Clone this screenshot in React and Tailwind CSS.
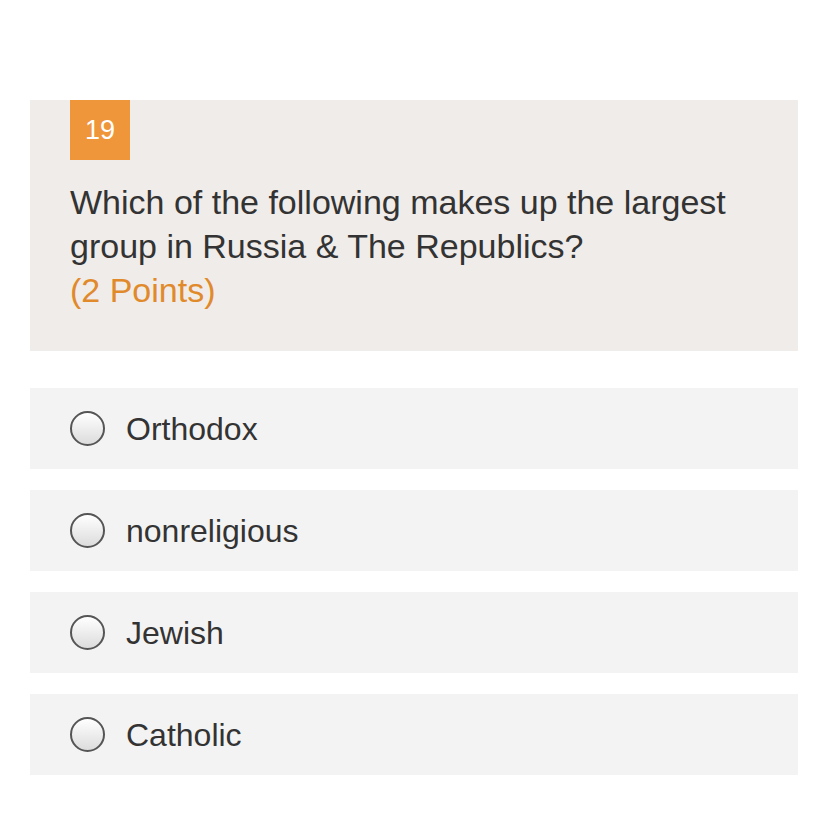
export default function App() {
  const options = ["Orthodox", "nonreligious", "Jewish", "Catholic"];

  return (
    <div className="min-h-screen bg-white pt-[100px] px-[30px] font-['Liberation_Sans',Arial,sans-serif]">
      <div className="bg-[#f0ece9] px-10 pb-[39px]">
        <div className="w-[60px] h-[60px] bg-[#f0963a] text-white text-[27px] flex items-center justify-center">
          19
        </div>
        <div className="mt-5 text-[34px] leading-[44px] text-[#333333]">
          Which of the following makes up the largest group in Russia &amp; The Republics?
          <div className="text-[#e08a2c]">(2 Points)</div>
        </div>
      </div>

      <div className="mt-[37px] flex flex-col gap-[21px]">
        {options.map((opt) => (
          <label key={opt} className="h-[81px] bg-[#f3f3f3] flex items-center px-10 gap-[21px]">
            <span className="w-[35px] h-[35px] rounded-full border-2 border-[#555555] bg-gradient-to-b from-white to-[#dcdcdc] shrink-0" />
            <span className="text-[32px] text-[#333333]">{opt}</span>
          </label>
        ))}
      </div>
    </div>
  );
}
